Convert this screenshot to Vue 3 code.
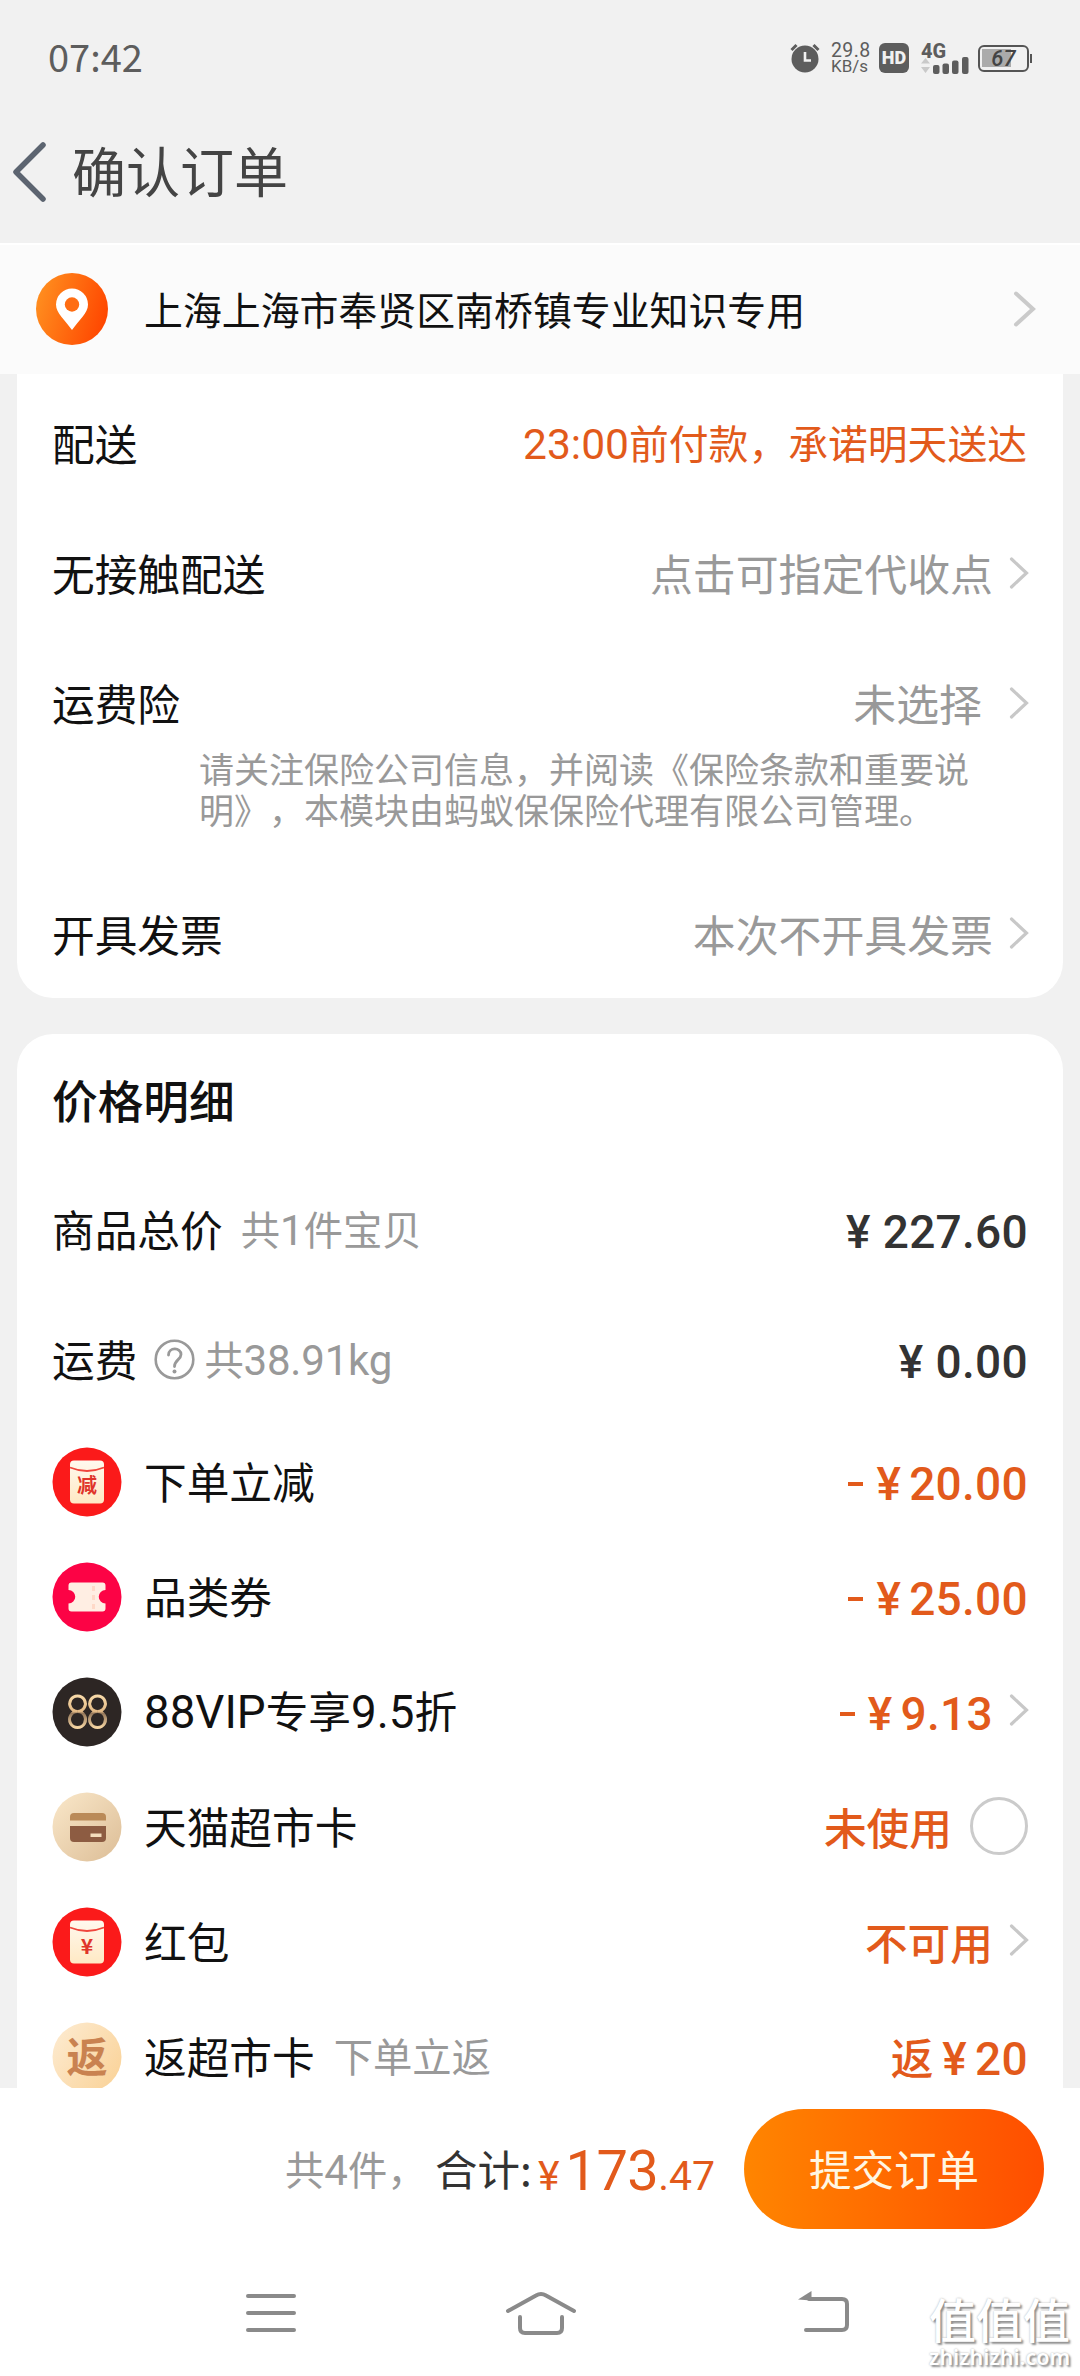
<script setup>
const discounts = [
  { icon: 'cut', label: ['下单立减'], minus: true, amount: '20.00' },
  { icon: 'ticket', label: ['品类券'], minus: true, amount: '25.00' },
  { icon: 'vip', label: ['88VIP', '专享', '9.5', '折'], minus: true, amount: '9.13', arrow: true },
  { icon: 'card', label: ['天猫超市卡'], text: '未使用', radio: true },
  { icon: 'packet', label: ['红包'], text: '不可用', arrow: true },
  { icon: 'back', label: ['返超市卡'], note: '下单立返', text: '返', amount: '20' },
]
const isLatin = (part) => /^[\x20-\x7e]+$/.test(part)
</script>

<template>
  <div class="page">
    <header class="status">
      <span class="time">07:42</span>
      <div class="sys">
        <svg class="alarm" width="30" height="30" viewBox="0 0 30 30">
          <circle cx="15" cy="16" r="13.5" fill="#5d5d5d" />
          <path d="M1.5 7 6.500 2M28.500 7 23.500 2" stroke="#5d5d5d" stroke-width="3" />
          <path d="M15 9v8.500h6" fill="none" stroke="#f1f1f1" stroke-width="2.600" />
        </svg>
        <div class="speed"><span class="rate">29.8</span><span class="unit">KB/s</span></div>
        <div class="hd">HD</div>
        <div class="signal">
          <span class="net">4G</span>
          <svg width="48" height="17" viewBox="0 0 48 17">
            <path d="M0 6.500 4.500 1 9 6.500zM0 10h9l-4.500 6z" fill="#c9c9c9" />
            <g fill="#5d5d5d">
              <rect x="12" y="8" width="6.500" height="9" rx="2" />
              <rect x="21.500" y="6.500" width="6.500" height="10.500" rx="2" />
              <rect x="31" y="3.500" width="6.500" height="13.500" rx="2" />
              <rect x="41" y="0" width="6.500" height="17" rx="2" />
            </g>
          </svg>
        </div>
        <div class="battery"><i class="charge"></i><span class="pct">67</span></div>
        <i class="cap"></i>
      </div>
    </header>

    <div class="titlebar">
      <svg width="36" height="62" viewBox="0 0 36 62">
        <path d="M31 4 4 31 31 58" fill="none" stroke="#5c6470" stroke-width="5.500" stroke-linecap="round" stroke-linejoin="round" />
      </svg>
      <h1>确认订单</h1>
    </div>

    <div class="address">
      <svg width="72" height="72" viewBox="0 0 72 72">
        <defs>
          <linearGradient id="pin" x1="0" y1="0.300" x2="1" y2="0.600">
            <stop offset="0" stop-color="#ff8f1f" />
            <stop offset="1" stop-color="#ff4600" />
          </linearGradient>
        </defs>
        <circle cx="36" cy="36" r="36" fill="url(#pin)" />
        <path d="M36 57C29 47 20 40 20 31.500a16 16 0 0 1 32 0C52 40 43 47 36 57z" fill="#fff" />
        <circle cx="36" cy="31.500" r="7.200" fill="#ff6d12" />
      </svg>
      <span class="addr">上海上海市奉贤区南桥镇专业知识专用</span>
      <svg class="go" width="24" height="38" viewBox="0 0 24 38">
        <path d="M3 3.500 20 19 3 34.500" fill="none" stroke="#cacaca" stroke-width="4" stroke-linecap="round" />
      </svg>
    </div>

    <section class="card delivery">
      <div class="row">
        <span class="label">配送</span>
        <span class="promise"><span class="num">23:00</span>前付款，承诺明天送达</span>
      </div>
      <div class="row">
        <span class="label">无接触配送</span>
        <span class="choice">点击可指定代收点</span>
        <svg class="arrow" width="20" height="34" viewBox="0 0 20 34"><path d="M2.500 3 17.500 17 2.500 31" /></svg>
      </div>
      <div class="insurance">
        <div class="row">
          <span class="label">运费险</span>
          <span class="choice wide">未选择</span>
          <svg class="arrow" width="20" height="34" viewBox="0 0 20 34"><path d="M2.500 3 17.500 17 2.500 31" /></svg>
        </div>
        <p>请关注保险公司信息，并阅读《保险条款和重要说<br />明》，本模块由蚂蚁保保险代理有限公司管理。</p>
      </div>
      <div class="row invoice">
        <span class="label">开具发票</span>
        <span class="choice">本次不开具发票</span>
        <svg class="arrow" width="20" height="34" viewBox="0 0 20 34"><path d="M2.500 3 17.500 17 2.500 31" /></svg>
      </div>
    </section>

    <section class="card price">
      <h2>价格明细</h2>
      <div class="row">
        <span class="label">商品总价</span>
        <span class="note">共<span class="num">1</span>件宝贝</span>
        <span class="money dark"><span class="yen">¥</span>227.60</span>
      </div>
      <div class="row">
        <span class="label">运费</span>
        <svg class="help" width="41" height="41" viewBox="0 0 41 41">
          <circle cx="20.500" cy="20.500" r="18.800" fill="none" stroke="#999" stroke-width="2.600" />
          <path d="M14.500 16c0-8 12.500-8 12.500-.5 0 5-6.500 5.500-6.500 12" fill="none" stroke="#999" stroke-width="2.800" stroke-linecap="round" />
          <circle cx="20.500" cy="32.500" r="2" fill="#999" />
        </svg>
        <span class="note weight">共<span class="num">38.91kg</span></span>
        <span class="money dark"><span class="yen">¥</span>0.00</span>
      </div>

      <ul>
        <li v-for="d in discounts" :key="d.icon">
          <svg v-if="d.icon === 'cut' || d.icon === 'packet'" class="badge" width="70" height="70" viewBox="0 0 70 70">
            <defs>
              <linearGradient :id="d.icon" x1="0" y1="0" x2="0" y2="1">
                <stop offset="0" stop-color="#fff8ee" />
                <stop offset="1" stop-color="#ffe9c4" />
              </linearGradient>
            </defs>
            <circle cx="35" cy="35" r="34.500" fill="#fb1a1a" />
            <rect x="18" y="13.500" width="34" height="43" rx="4" :fill="`url(#${d.icon})`" />
            <path d="M18 20.500Q35 27.500 52 20.500" fill="none" stroke="#f0453c" stroke-width="1.800" />
            <text v-if="d.icon === 'cut'" x="35" y="46" font-size="20" class="glyph">减</text>
            <text v-else x="35" y="47" font-size="21" class="glyph">¥</text>
          </svg>
          <svg v-else-if="d.icon === 'ticket'" class="badge" width="70" height="70" viewBox="0 0 70 70">
            <circle cx="35" cy="35" r="34.500" fill="#fc0345" />
            <path d="M19.500 20.500h31a3 3 0 0 1 3 3v4.500a6.500 6.500 0 0 0 0 13.500V46.500a3 3 0 0 1-3 3h-31a3 3 0 0 1-3-3v-5a6.500 6.500 0 0 0 0-13.500V23.500a3 3 0 0 1 3-3z" fill="#ffeee3" />
            <path d="M41.500 24v23" stroke="#ffd9c8" stroke-width="3" stroke-dasharray="5 4" />
          </svg>
          <svg v-else-if="d.icon === 'vip'" class="badge" width="70" height="70" viewBox="0 0 70 70">
            <defs>
              <linearGradient id="gold" x1="0" y1="0" x2="0" y2="1">
                <stop offset="0" stop-color="#f7d9a8" />
                <stop offset="0.500" stop-color="#e3b985" />
                <stop offset="0.550" stop-color="#93765a" />
                <stop offset="1" stop-color="#f5d4a2" />
              </linearGradient>
            </defs>
            <circle cx="35" cy="35" r="34.500" fill="#2d2624" />
            <g fill="none" stroke="url(#gold)" stroke-width="3">
              <path d="M25.500 34.500a7.800 7.800 0 1 1 .1 0a8 8 0 1 1-.1 0z" />
              <path d="M45.500 34.500a7.800 7.800 0 1 1 .1 0a8 8 0 1 1-.1 0z" />
            </g>
          </svg>
          <svg v-else-if="d.icon === 'card'" class="badge" width="70" height="70" viewBox="0 0 70 70">
            <defs>
              <linearGradient id="sand" x1="0" y1="0" x2="1" y2="1">
                <stop offset="0" stop-color="#fae8ca" />
                <stop offset="1" stop-color="#dcbd96" />
              </linearGradient>
            </defs>
            <circle cx="35" cy="35" r="34.500" fill="url(#sand)" />
            <path d="M18 28.500V25a4 4 0 0 1 4-4h28a4 4 0 0 1 4 4v3.500z" fill="#ba8a58" />
            <path d="M18 34h36v12a4 4 0 0 1-4 4H22a4 4 0 0 1-4-4z" fill="#8d5c42" />
            <rect x="38.500" y="41.500" width="11" height="3.500" fill="#f3dcbc" />
          </svg>
          <svg v-else class="badge" width="70" height="70" viewBox="0 0 70 70">
            <defs>
              <linearGradient id="cream" x1="0" y1="0" x2="1" y2="0.700">
                <stop offset="0" stop-color="#fdecd3" />
                <stop offset="1" stop-color="#fad49c" />
              </linearGradient>
            </defs>
            <circle cx="35" cy="35" r="34.500" fill="url(#cream)" />
            <text x="35" y="50" font-size="41" class="return">返</text>
          </svg>
          <span class="label"><span v-for="part in d.label" :key="part" :class="{ num: isLatin(part) }">{{ part }}</span></span>
          <span v-if="d.note" class="note">{{ d.note }}</span>
          <span class="money"><span v-if="d.minus" class="minus"></span><span v-if="d.text" class="word">{{ d.text }}</span><template v-if="d.amount"><span class="yen">¥</span>{{ d.amount }}</template></span>
          <i v-if="d.radio" class="radio"></i>
          <svg v-if="d.arrow" class="arrow" width="20" height="34" viewBox="0 0 20 34"><path d="M2.500 3 17.500 17 2.500 31" /></svg>
        </li>
      </ul>
    </section>

    <footer class="checkout">
      <span class="count">共<span class="num">4</span>件，</span>
      <span class="sum">合计:</span>
      <span class="total"><span class="cur">¥</span><span class="int">173</span><span class="dec">.47</span></span>
      <button>提交订单</button>
    </footer>

    <nav>
      <svg width="50" height="40" viewBox="0 0 50 40" class="menu">
        <path d="M2 3h46M2 20h46M2 37h46" stroke-width="4" />
      </svg>
      <svg width="72" height="46" viewBox="0 0 72 46" class="home">
        <path d="M3 21 31 5.500Q36 2.500 41 5.500L69 21M15 27v11q0 5 5 5h32q5 0 5-5V27" stroke-width="4" />
      </svg>
      <svg width="54" height="44" viewBox="0 0 54 44" class="undo">
        <path d="M9 40h36q5 0 5-5V14q0-5-5-5H12" stroke-width="4" />
        <path d="M1 9.500 14.500 1v9.500z" fill="#8a8a8a" stroke="none" />
      </svg>
      <div class="mark"><span class="cn">值值值</span><span class="en">zhizhizhi.com</span></div>
    </nav>
  </div>
</template>

<style>
body {
  background: #f1f1f1;
}
</style>

<style scoped>
.page {
  width: 1080px;
  height: 2376px;
  overflow: hidden;
  display: flex;
  flex-direction: column;
  background: #f1f1f1;
  font-family: "Noto Sans CJK SC", sans-serif;
  color: #111;
  white-space: nowrap;
  text-spacing-trim: space-all;
}
svg {
  display: block;
  flex: none;
}
.num {
  font-family: Roboto, sans-serif;
  font-size: 1.07em;
  line-height: 1;
}
.status {
  height: 116px;
  display: flex;
  align-items: center;
  justify-content: space-between;
  padding: 0 48px 0 48px;
  box-sizing: border-box;
  color: #5d5d5d;
}
.time {
  margin-top: -4px;
  font-size: 38px;
  line-height: 44px;
}
.sys {
  display: flex;
  align-items: center;
}
.speed {
  width: 40px;
  margin-left: 11px;
  display: flex;
  flex-direction: column;
}
.speed .rate {
  font: 400 19.500px/17px Roboto, sans-serif;
  letter-spacing: 0.4px;
}
.speed .unit {
  font: 400 17px/15px Roboto, sans-serif;
}
.hd {
  width: 30px;
  height: 30px;
  margin-left: 8px;
  border-radius: 6px;
  background: #5d5d5d;
  color: #f1f1f1;
  font: 900 18px/30px Roboto, sans-serif;
  text-align: center;
}
.signal {
  width: 48px;
  margin-left: 12px;
}
.net {
  display: block;
  height: 14px;
  font: 800 20px/16px Roboto, sans-serif;
}
.battery {
  position: relative;
  width: 51px;
  height: 27px;
  margin-left: 9px;
  box-sizing: border-box;
  border: 2.500px solid #555;
  border-radius: 6px;
}
.charge {
  position: absolute;
  left: 2px;
  top: 2px;
  width: 29px;
  height: 18px;
  background: #ababab;
}
.pct {
  position: absolute;
  inset: 0;
  font: italic 500 22px/23px Roboto, sans-serif;
  text-align: center;
  color: #444;
}
.cap {
  width: 2px;
  height: 9px;
  margin-left: 1px;
  background: #555;
}
.titlebar {
  height: 127px;
  box-sizing: border-box;
  padding: 0 0 16px 12px;
  display: flex;
  align-items: center;
}
h1 {
  margin: -3px 0 0 24px;
  font-size: 54px;
  font-weight: 400;
  line-height: 64px;
  color: #444;
}
.address {
  height: 131px;
  box-sizing: border-box;
  border-top: 2px solid #fff;
  background: #fbfbfb;
  padding: 0 43px 1px 36px;
  display: flex;
  align-items: center;
}
.addr {
  margin: -3px 0 0 36px;
  font-size: 38.900px;
  line-height: 50px;
}
.go {
  margin-left: auto;
}
.card {
  margin: 0 17px;
  background: #fff;
  box-sizing: border-box;
  padding: 0 37px 0 36px;
  border-radius: 36px;
}
.delivery {
  height: 624px;
  padding-top: 6px;
  border-radius: 0 0 36px 36px;
}
.row {
  height: 130px;
  display: flex;
  align-items: center;
}
.label {
  font-size: 42.700px;
  line-height: 50px;
  margin-top: -6px;
  margin-left: -1px;
}
.promise {
  margin: -6px -1px 0 auto;
  font-size: 39.800px;
  line-height: 50px;
  color: #e25a1b;
}
.choice {
  margin: -6px 16px 0 auto;
  font-size: 42.900px;
  line-height: 50px;
  color: #999;
}
.choice.wide {
  margin-right: 27px;
}
.arrow {
  margin-top: -5px;
  margin-right: -3px;
}
.arrow path {
  fill: none;
  stroke: #c8c8c8;
  stroke-width: 3.200;
  stroke-linecap: round;
}
.insurance {
  height: 233px;
}
p {
  margin: -23px 0 0 146px;
  font-size: 35px;
  line-height: 41px;
  color: #999;
}
.invoice {
  height: 125px;
}
.price {
  margin-top: 36px;
  height: 1054px;
  flex: none;
  overflow: hidden;
  border-radius: 36px 36px 0 0;
}
h2 {
  margin: 0 0 0 -1px;
  height: 132px;
  font-size: 45.700px;
  font-weight: 500;
  line-height: 130px;
}
.note {
  margin: -6px 0 0 18px;
  font-size: 39.300px;
  line-height: 50px;
  color: #999;
}
.help {
  margin: -4px 0 0 17px;
}
.weight {
  margin-left: 9px;
  letter-spacing: -0.2px;
}
.money {
  margin: 2px -2px 0 auto;
  display: flex;
  align-items: center;
  font-family: Roboto, "Noto Sans CJK SC", sans-serif;
  font-size: 46px;
  font-weight: 500;
  line-height: 50px;
  letter-spacing: 0.300px;
  color: #e25a1b;
}
.yen {
  margin-right: 8px;
}
.dark {
  color: #333;
}
.dark .yen {
  margin-right: 12px;
}
.minus {
  width: 15px;
  height: 4px;
  margin-right: 13px;
  background: #e25a1b;
}
.word {
  margin-top: -5px;
  font-family: "Noto Sans CJK SC", sans-serif;
  font-size: 42.700px;
  letter-spacing: 0;
  margin-right: 9px;
}
ul {
  list-style: none;
  margin: -2px 0 0;
  padding: 0;
}
li {
  height: 115px;
  display: flex;
  align-items: center;
}
li .money {
  margin-top: 4px;
}
li .label {
  margin-top: -3px;
  margin-left: 22px;
}
li .note {
  margin-top: -3px;
  margin-left: 19px;
}
.badge {
  margin-left: -1px;
}
li .arrow {
  margin-top: -3px;
  margin-left: 18px;
}
li .word:last-child {
  margin-right: 0;
}
.radio {
  width: 58px;
  height: 58px;
  box-sizing: border-box;
  margin: -2px -2px 0 20px;
  border: 3px solid #cbcbcb;
  border-radius: 50%;
}
.glyph,
.return {
  font-family: "Noto Sans CJK SC", sans-serif;
  font-weight: 700;
  text-anchor: middle;
  fill: #e0342a;
}
.return {
  fill: #c98250;
}
.checkout {
  height: 162px;
  flex: none;
  box-sizing: border-box;
  background: #fff;
  padding: 0 36px 0 285px;
  display: flex;
  align-items: center;
}
.count {
  width: 150px;
  margin-top: -2px;
  font-size: 39.300px;
  line-height: 50px;
  color: #999;
}
.sum {
  width: 103px;
  margin-top: -2px;
  font-size: 42.500px;
  line-height: 50px;
  color: #333;
}
.total {
  width: 206px;
  margin-top: 9px;
  display: flex;
  align-items: baseline;
  font-family: Roboto, sans-serif;
  color: #e25a1b;
  line-height: 60px;
}
.cur,
.dec {
  font-size: 41px;
}
.cur {
  margin-right: 6px;
}
.int {
  font-size: 56px;
  letter-spacing: -0.6px;
}
button {
  width: 300px;
  height: 120px;
  border: 0;
  border-radius: 60px;
  background: linear-gradient(90deg, #ff8500, #ff4e00);
  color: #fff6e2;
  font: 400 42.500px/116px "Noto Sans CJK SC", sans-serif;
  padding: 0 0 2px;
}
nav {
  flex: 1;
  background: #fff;
  display: flex;
  align-items: flex-start;
}
nav svg {
  fill: none;
  stroke: #8a8a8a;
  stroke-linecap: round;
}
.menu {
  margin: 43px 0 0 246px;
}
.home {
  margin: 40px 0 0 209px;
}
.undo {
  margin: 40px 0 0 220px;
}
.mark {
  margin: 42px 0 0 78px;
  width: 146px;
  display: flex;
  flex-direction: column;
  color: #fff;
  text-shadow: 2px 2px 2px #8f8f8f, 0 0 2px #aaa;
}
.cn {
  font-size: 47px;
  font-weight: 500;
  line-height: 52px;
}
.en {
  font: 600 21.500px/26px "Noto Sans", sans-serif;
}
</style>
